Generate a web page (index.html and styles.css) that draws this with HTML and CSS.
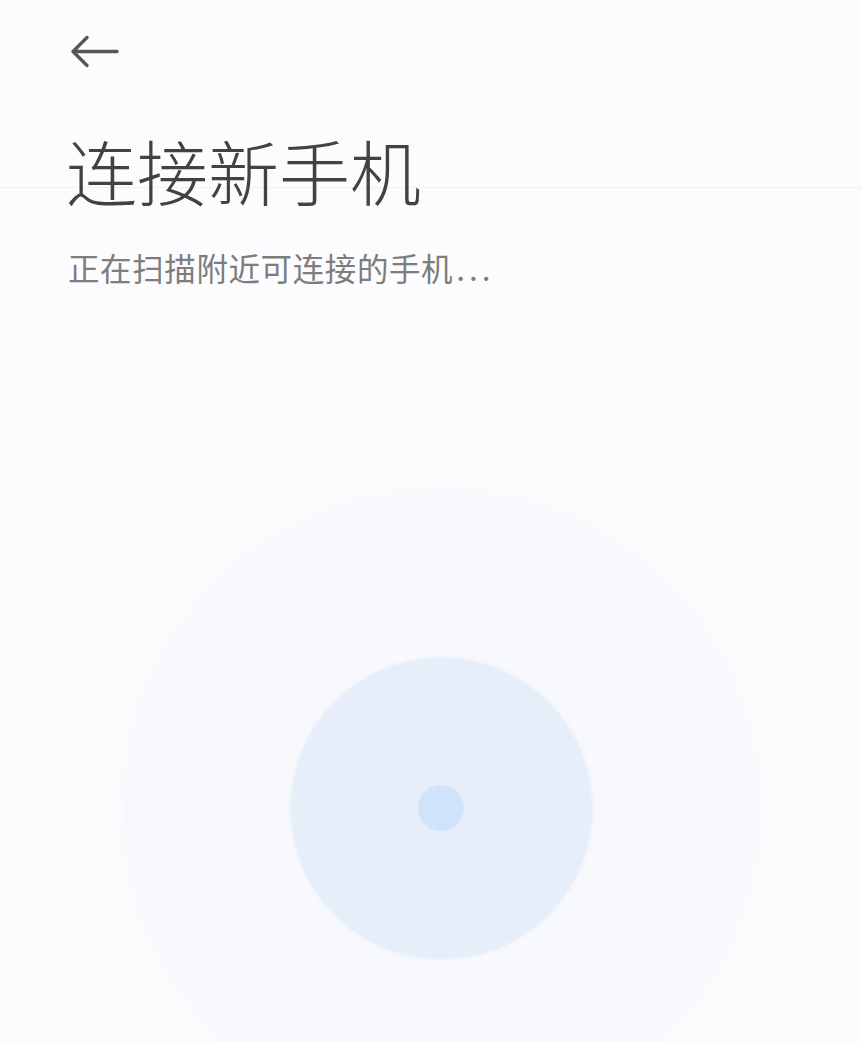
FILE: index.html
```html
<!DOCTYPE html>
<html lang="zh-CN">
<head>
<meta charset="utf-8">
<title>连接新手机</title>
<link rel="stylesheet" href="styles.css">
</head>
<body>
<div class="page">
  <header class="topbar">
    <svg class="back" width="52" height="36" viewBox="0 0 52 36" aria-label="返回">
      <path d="M49 17.5 H5 M19 3.5 L5 17.5 L19 31.5" fill="none" stroke="#575757" stroke-width="3.4" stroke-linecap="round" stroke-linejoin="round"/>
    </svg>
  </header>
  <section class="heading">
    <h1 class="title">连接新手机</h1>
    <p class="subtitle">正在扫描附近可连接的手机<span class="dots">...</span></p>
  </section>
  <section class="radar">
    <div class="ring-outer">
      <div class="ring-inner">
        <div class="dot"></div>
      </div>
    </div>
  </section>
</div>
</body>
</html>
```
FILE: styles.css
```css
html, body {
  margin: 0;
  padding: 0;
}
body {
  background: #fcfbfd;
  font-family: "Noto Sans CJK SC", "Noto Sans", sans-serif;
}
.page {
  width: 862px;
  height: 1042px;
  overflow: hidden;
  background:
    linear-gradient(to bottom, transparent 187px, #f1f0f4 187px, #f1f0f4 188px, transparent 188px),
    #fcfbfd;
}
.topbar {
  padding: 34px 0 0 68px;
  height: 38px;
}
.back {
  display: block;
}
.heading {
  padding-left: 66px;
}
.title {
  margin: 52px 0 0 0;
  font-size: 71px;
  line-height: 90px;
  font-weight: 300;
  color: #424242;
  letter-spacing: 0;
}
.subtitle {
  margin: 33px 0 0 2px;
  font-size: 31.5px;
  line-height: 40px;
  font-weight: 400;
  color: #7d7d7d;
  letter-spacing: 0.6px;
}
.dots {
  letter-spacing: 4px;
  margin-left: 3px;
}
.radar {
  display: flex;
  justify-content: center;
  padding-left: 20px;
  margin-top: 205px;
}
.ring-outer {
  width: 632px;
  height: 632px;
  flex: none;
  border-radius: 50%;
  background: radial-gradient(circle, #f8f9fc 0%, #f7f8fc 90%, #f8f9fc 100%);
  box-shadow: 0 0 10px 2px rgba(246, 247, 252, 0.9);
  display: flex;
  align-items: center;
  justify-content: center;
}
.ring-inner {
  width: 301px;
  height: 301px;
  border-radius: 50%;
  background: radial-gradient(circle, #e8eef9 0%, #e7eefa 60%, #e3eefb 100%);
  box-shadow: 0 0 3px 1px rgba(230, 238, 250, 0.8);
  display: flex;
  align-items: center;
  justify-content: center;
}
.dot {
  width: 46px;
  height: 46px;
  border-radius: 50%;
  background: #cfe3fb;
}
```
